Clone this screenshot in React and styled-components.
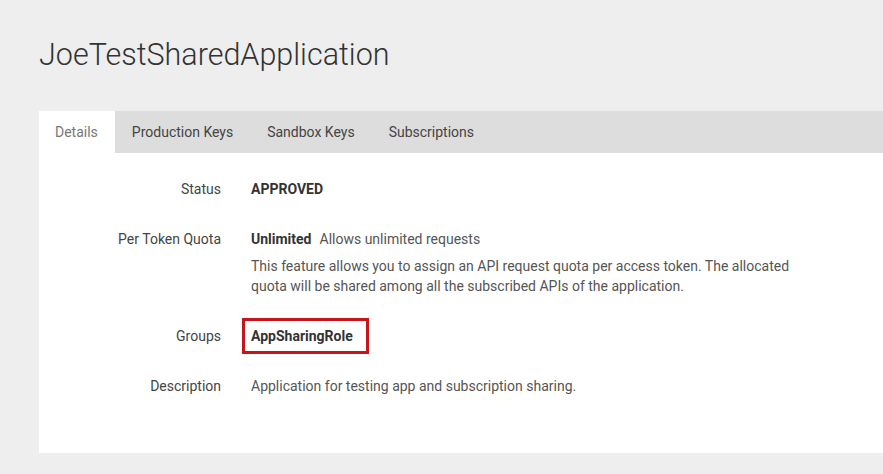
import React from 'react'
import styled, { createGlobalStyle } from 'styled-components'

const GlobalStyle = createGlobalStyle`
    body {
        margin: 0;
        background: #eeeeee;
        font-family: Roboto, "Liberation Sans", sans-serif;
        color: #444;
    }
`

const Page = styled.div`
    padding: 0 0 0 39px;
`

const Title = styled.h1`
    margin: 0;
    padding: 36px 0 0;
    height: 111px;
    box-sizing: border-box;
    font-size: 30.5px;
    font-weight: 300;
    color: #333;
    line-height: 38px;
`

const TabBar = styled.div`
    display: flex;
    height: 42px;
    background: #dddddd;
`

const Tab = styled.div`
    display: flex;
    align-items: center;
    padding: 0 17px 0 ${p => (p.active ? '16px' : '17px')};
    font-size: 14px;
    color: ${p => (p.active ? '#777' : '#444')};
    background: ${p => (p.active ? '#fff' : 'transparent')};
`

const Card = styled.div`
    background: #fff;
    padding: 26px 0 57px;
    display: grid;
    grid-template-columns: 182px 1fr;
    column-gap: 30px;
    row-gap: 30px;
    font-size: 14px;
    line-height: 20px;
`

const Label = styled.div`
    text-align: right;
    color: #444;
`

const Value = styled.div`
    color: #555;
`

const Strong = styled.span`
    font-weight: 700;
    color: #333;
    margin-right: ${p => p.gap || 0};
`

const Note = styled.p`
    margin: 7px 0 0;
    max-width: 560px;
    color: #555;
`

const Highlight = styled.span`
    display: inline-block;
    margin: -8px 0 -8px -9px;
    padding: 5px 13px 5px 6px;
    border: 3px solid #c4161c;
    font-weight: 700;
    color: #333;
`

export default function App() {
    return (
        <Page>
            <GlobalStyle />
            <Title>JoeTestSharedApplication</Title>
            <TabBar>
                <Tab active>Details</Tab>
                <Tab>Production Keys</Tab>
                <Tab>Sandbox Keys</Tab>
                <Tab>Subscriptions</Tab>
            </TabBar>
            <Card>
                <Label>Status</Label>
                <Value><Strong>APPROVED</Strong></Value>

                <Label>Per Token Quota</Label>
                <Value>
                    <Strong gap="8px">Unlimited</Strong>Allows unlimited requests
                    <Note>
                        This feature allows you to assign an API request quota per access token. The allocated
                        quota will be shared among all the subscribed APIs of the application.
                    </Note>
                </Value>

                <Label>Groups</Label>
                <Value><Highlight>AppSharingRole</Highlight></Value>

                <Label>Description</Label>
                <Value>Application for testing app and subscription sharing.</Value>
            </Card>
        </Page>
    )
}
